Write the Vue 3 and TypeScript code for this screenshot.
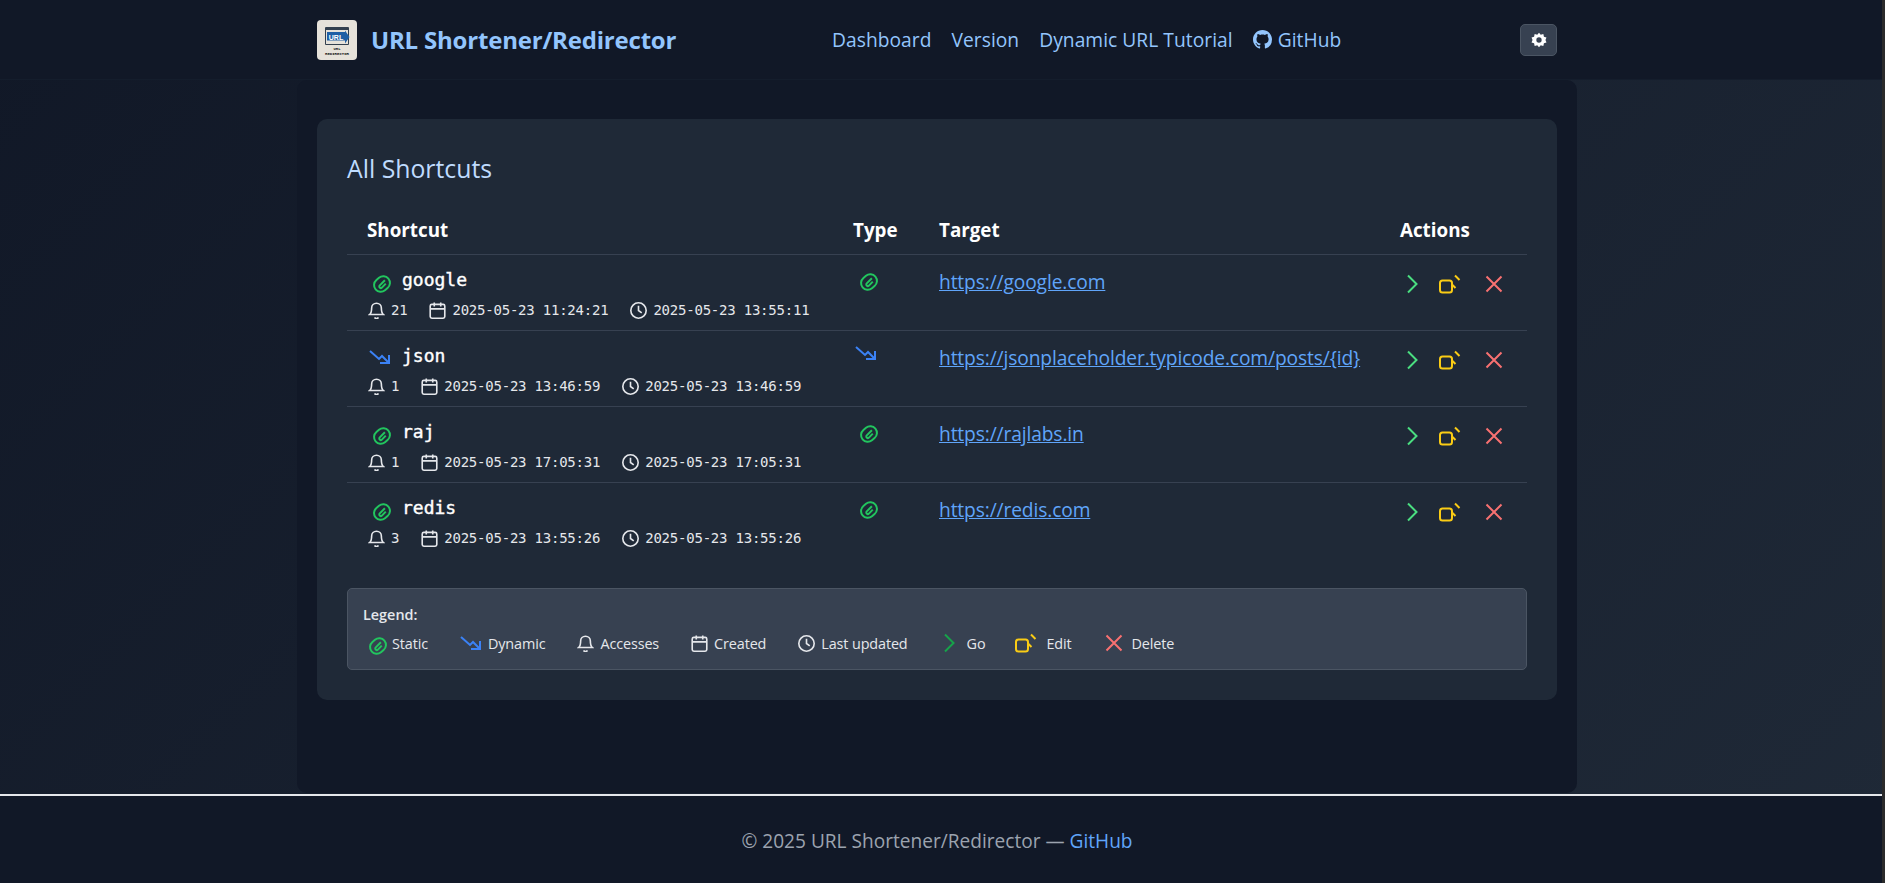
<script setup lang="ts">
interface Row { name: string; type: 'static' | 'dynamic'; hits: number; created: string; updated: string; url: string }
const rows: Row[] = [
  { name: 'google', type: 'static', hits: 21, created: '2025-05-23 11:24:21', updated: '2025-05-23 13:55:11', url: 'https://google.com' },
  { name: 'json', type: 'dynamic', hits: 1, created: '2025-05-23 13:46:59', updated: '2025-05-23 13:46:59', url: 'https://jsonplaceholder.typicode.com/posts/{id}' },
  { name: 'raj', type: 'static', hits: 1, created: '2025-05-23 17:05:31', updated: '2025-05-23 17:05:31', url: 'https://rajlabs.in' },
  { name: 'redis', type: 'static', hits: 3, created: '2025-05-23 13:55:26', updated: '2025-05-23 13:55:26', url: 'https://redis.com' },
]
const clipInner = 'M15.500 7.500L9.300 13.700a1.800 1.800 0 0 0 2.600 2.600L16.500 11.500'
const trend = 'M1 1L10 9L13 6L20 13M20 5V13H11'
const bell = 'M12 3a6 6 0 0 0-6 6c0 6-2.500 8-2.500 8h17S18 15 18 9a6 6 0 0 0-6-6zM9.700 20.500a2.500 2.500 0 0 0 4.600 0'
</script>

<template>
  <div class="page">
    <header class="topbar">
      <div class="topbar-inner">
        <div class="brand">
          <svg class="logo" viewBox="0 0 40 40">
            <rect width="40" height="40" rx="4" fill="#e6e2da" />
            <rect x="8" y="7" width="24" height="18" rx="1" fill="#33404f" />
            <rect x="9" y="10" width="22" height="14" fill="#e6e2da" />
            <path d="M10 12h18v-1.500l4.500 6.500-4.500 6.500v-3H10z" fill="#1f5fa5" />
            <text x="19" y="20" class="logo-url">URL</text>
            <text x="20" y="30" class="logo-cap">URL</text>
            <text x="20" y="35" class="logo-cap">REDIRECTOR</text>
          </svg>
          <span class="brand-name">URL Shortener/Redirector</span>
        </div>
        <nav class="nav">
          <a>Dashboard</a>
          <a>Version</a>
          <a>Dynamic URL Tutorial</a>
          <a class="gh">
            <svg viewBox="0 0 16 16" class="gh-icon"><path fill="currentColor" d="M8 0C3.580 0 0 3.580 0 8c0 3.540 2.290 6.530 5.470 7.590.4.070.55-.17.55-.38 0-.19-.01-.82-.01-1.490-2.010.37-2.530-.49-2.690-.94-.09-.23-.48-.94-.82-1.130-.28-.15-.68-.52-.01-.53.63-.01 1.080.58 1.230.82.720 1.210 1.870.87 2.330.66.070-.52.280-.87.510-1.070-1.780-.2-3.640-.89-3.640-3.950 0-.87.310-1.590.820-2.150-.08-.2-.36-1.020.08-2.120 0 0 .67-.21 2.200.82.640-.18 1.320-.27 2-.27s1.360.09 2 .27c1.530-1.040 2.200-.82 2.200-.82.440 1.100.160 1.920.080 2.120.510.560.820 1.270.820 2.150 0 3.070-1.870 3.750-3.650 3.950.290.250.540.730.540 1.480 0 1.070-.01 1.930-.01 2.200 0 .210.150.460.550.380A8.010 8.010 0 0 0 16 8c0-4.420-3.580-8-8-8z"/></svg>
            GitHub
          </a>
        </nav>
        <button class="theme-btn" aria-label="Theme">
          <svg viewBox="0 0 24 24" class="gear"><path fill="#fff" fill-rule="evenodd" d="M12 1l2.600 3.100 3.900-1 .9 3.900 3.800 1.300-1.500 3.700 1.500 3.700-3.800 1.300-.9 3.900-3.900-1L12 23l-2.600-3.100-3.900 1-.9-3.900-3.800-1.300L2.300 12 .8 8.300 4.600 7l.9-3.900 3.900 1zM12 8a4 4 0 1 0 0 8 4 4 0 0 0 0-8z"/></svg>
        </button>
      </div>
    </header>

    <div class="main-wrap">
      <main class="main">
        <section class="card">
          <h2 class="title">All Shortcuts</h2>
          <table class="table">
            <thead>
              <tr>
                <th class="c-short">Shortcut</th>
                <th class="c-type">Type</th>
                <th class="c-target">Target</th>
                <th class="c-act">Actions</th>
              </tr>
            </thead>
            <tbody>
              <tr v-for="r in rows" :key="r.name">
                <td class="c-short">
                  <div class="name-line">
                    <div class="slot">
                      <svg v-if="r.type === 'static'" class="clip name-clip" viewBox="0 0 24 24"><rect x="2" y="4" width="20" height="16" rx="8" transform="rotate(-40 12 12)" /><path :d="clipInner" /></svg>
                      <svg v-else class="trend name-trend" viewBox="0 0 22 14"><path :d="trend" /></svg>
                    </div>
                    <span class="name">{{ r.name }}</span>
                  </div>
                  <div class="meta">
                    <span class="meta-item">
                      <svg class="mi" viewBox="1.500 1.500 21 21"><path :d="bell" /></svg>{{ r.hits }}
                    </span>
                    <span class="meta-item">
                      <svg class="mi" viewBox="1.500 1.500 21 21"><rect x="3" y="4.500" width="18" height="17" rx="2" /><path d="M8 2v5M16 2v5M3 10h18" /></svg>{{ r.created }}
                    </span>
                    <span class="meta-item">
                      <svg class="mi" viewBox="1.500 1.500 21 21"><circle cx="12" cy="12" r="9.500" /><path d="M12 6v6l4 3" /></svg>{{ r.updated }}
                    </span>
                  </div>
                </td>
                <td class="c-type">
                  <svg v-if="r.type === 'static'" class="clip type-clip" viewBox="0 0 24 24"><rect x="2" y="4" width="20" height="16" rx="8" transform="rotate(-40 12 12)" /><path :d="clipInner" /></svg>
                  <svg v-else class="trend type-trend" viewBox="0 0 22 14"><path :d="trend" /></svg>
                </td>
                <td class="c-target"><a class="link">{{ r.url }}</a></td>
                <td class="c-act">
                  <div class="acts">
                    <svg class="act go" viewBox="0 0 24 24"><path d="M8 3.500l8.500 8.500-8.500 8.500" /></svg>
                    <svg class="act edit" viewBox="0 0 24 24"><rect x="2" y="8.500" width="12" height="12" rx="2.500" /><path d="M14 12.500l3.500 3.500M17 3.500l4.500 4.500" /></svg>
                    <svg class="act del" viewBox="0 0 24 24"><path d="M4.500 4.500l15 15M19.500 4.500l-15 15" /></svg>
                  </div>
                </td>
              </tr>
            </tbody>
          </table>

          <div class="legend">
            <div class="legend-title">Legend:</div>
            <div class="legend-items">
              <span class="li l-clip"><svg class="clip leg-clip" viewBox="0 0 24 24"><rect x="2" y="4" width="20" height="16" rx="8" transform="rotate(-40 12 12)" /><path :d="clipInner" /></svg>Static</span>
              <span class="li"><svg class="trend" viewBox="0 0 22 14"><path :d="trend" /></svg>Dynamic</span>
              <span class="li"><svg class="mi" viewBox="1.500 1.500 21 21"><path :d="bell" /></svg>Accesses</span>
              <span class="li"><svg class="mi" viewBox="1.500 1.500 21 21"><rect x="3" y="4.500" width="18" height="17" rx="2" /><path d="M8 2v5M16 2v5M3 10h18" /></svg>Created</span>
              <span class="li"><svg class="mi" viewBox="1.500 1.500 21 21"><circle cx="12" cy="12" r="9.500" /><path d="M12 6v6l4 3" /></svg>Last updated</span>
              <span class="li l-go"><svg class="act go-l" viewBox="0 0 24 24"><path d="M8 3.500l8.500 8.500-8.500 8.500" /></svg>Go</span>
              <span class="li l-edit"><svg class="act edit" viewBox="0 0 24 24"><rect x="2" y="8.500" width="12" height="12" rx="2.500" /><path d="M14 12.500l3.500 3.500M17 3.500l4.500 4.500" /></svg>Edit</span>
              <span class="li l-del"><svg class="act del" viewBox="0 0 24 24"><path d="M4.500 4.500l15 15M19.500 4.500l-15 15" /></svg>Delete</span>
            </div>
          </div>
        </section>
      </main>
    </div>

    <hr class="rule" />
    <footer class="footer">© 2025 URL Shortener/Redirector — <a class="foot-link">GitHub</a></footer>
  </div>
</template>

<style>
body { margin: 0; background: #2b2b2b; overflow: hidden; }
</style>

<style scoped>
.page {
  width: 1882px;
  height: 883px;
  font-family: "Open Sans", "Noto Sans", sans-serif;
  background: linear-gradient(135deg, #111827 0%, #1f2937 100%);
  display: flex;
  flex-direction: column;
  overflow: hidden;
}
.topbar { background: #111827; height: 80px; flex: none; padding-right: 8px; border-bottom: 1px solid #141d2c; box-sizing: border-box; }
.topbar-inner {
  width: 1240px;
  margin: 0 auto;
  height: 79px;
  display: grid;
  grid-template-columns: 515px auto 1fr;
  align-items: center;
}
.brand { display: flex; align-items: center; gap: 14px; }
.logo { width: 40px; height: 40px; display: block; }
.logo-url { font: 700 7px "Liberation Sans", sans-serif; fill: #fff; text-anchor: middle; }
.logo-cap { font: 700 4px "Liberation Mono", monospace; fill: #222; text-anchor: middle; }
.brand-name { font-size: 24px; font-weight: 700; color: #93c5fd; letter-spacing: -0.200px; }
.nav { display: flex; align-items: center; gap: 20px; font-size: 19.200px; color: #93c5fd; font-weight: 500; letter-spacing: 0.050px; }
.gh { display: flex; align-items: center; gap: 6px; }
.gh-icon { width: 19px; height: 19px; }
.theme-btn {
  justify-self: end;
  width: 37px; height: 32px;
  background: #374151;
  border: 1px solid #4b5563;
  border-radius: 5px;
  padding: 0;
  display: flex; align-items: center; justify-content: center;
}
.gear { width: 16px; height: 16px; display: block; }
.main-wrap { height: 714px; flex: none; padding-right: 8px; box-sizing: border-box; }
.main {
  width: 1280px;
  height: 713px;
  margin: 0 auto;
  padding: 39px 20px 0;
  box-sizing: border-box;
  background: #111827;
  border-radius: 10px;
}
.card {
  background: #1f2937;
  border-radius: 10px;
  padding: 30px 30px 0;
  height: 581px;
  box-sizing: border-box;
}
.title { margin: 0 0 19px; font-size: 24.800px; font-weight: 500; color: #bfdbfe; line-height: 38px; }
.table { width: 100%; border-collapse: separate; border-spacing: 0; table-layout: fixed; }
th { color: #fff; font-size: 18.800px; font-weight: 700; text-align: left; padding: 0 20px; height: 49px; box-sizing: border-box; border-bottom: 1px solid #374151; }
td { padding: 0 20px; vertical-align: top; height: 76px; border-bottom: 1px solid #374151; box-sizing: border-box; }
tbody tr:last-child td { border-bottom: 0; }
.c-short { width: 486px; box-sizing: border-box; }
.c-type { width: 86px; box-sizing: border-box; }
.c-target { width: 461px; box-sizing: border-box; }
.c-act { box-sizing: border-box; }
.name-line { display: flex; align-items: center; height: 24px; padding-top: 13px; }
.slot { width: 35px; height: 24px; flex: none; position: relative; display: flex; align-items: center; }
.name { font: 400 18px/24px "DejaVu Sans Mono", monospace; color: #fff; -webkit-text-stroke: 0.400px #fff; }
.clip { width: 20px; height: 20px; fill: none; stroke: #22c55e; stroke-width: 2.400; flex: none; overflow: visible; }
.trend { width: 22px; height: 14px; fill: none; stroke: #3b82f6; stroke-width: 2; flex: none; overflow: visible; }
.name-clip { margin: 8px 0 0 5px; }
.name-trend { margin: 2px 0 0 2px; }
.type-clip { display: block; margin: 17px 0 0 6px; }
.type-trend { display: block; margin: 15px 0 0 2px; }
.meta { display: flex; gap: 22px; font: 14px/20px "DejaVu Sans Mono", monospace; color: #e5e7eb; letter-spacing: -0.220px; margin: 8px 0 0 1px; }
.meta-item { display: flex; align-items: center; gap: 6px; }
.mi { width: 17px; height: 17px; fill: none; stroke: #e5e7eb; stroke-width: 2; flex: none; }
.link { color: #60a5fa; text-decoration: underline; font-size: 19.200px; line-height: 26px; display: block; padding-top: 14px; letter-spacing: -0.120px; white-space: nowrap; }
.acts { display: flex; align-items: center; gap: 14px; padding: 17px 0 0; }
.act { width: 24px; height: 24px; fill: none; stroke-width: 2; flex: none; }
.go { stroke: #4ade80; }
.go-l { stroke: #16a34a; }
.edit { stroke: #facc15; }
.del { stroke: #f87171; }
.acts .del { margin-left: 6px; }
.legend {
  margin-top: 29px;
  background: #374151;
  border: 1px solid #4b5563;
  border-radius: 5px;
  height: 82px;
  box-sizing: border-box;
  padding: 16px 15px;
  color: #e5e7eb;
  font-size: 14.400px;
}
.legend-title { font-weight: 600; line-height: 20px; }
.legend-items { display: flex; gap: 32px; height: 24px; margin: 6px 0 0 5px; align-items: center; letter-spacing: -0.120px; white-space: nowrap; }
.li { display: flex; align-items: center; gap: 6px; }
.l-clip { gap: 4px; }
.leg-clip { margin-top: 5px; }
.l-go { margin-left: -3px; }
.l-edit { gap: 8px; margin-left: -3px; }
.l-del { margin-left: -2px; }
.rule { margin: 0; height: 2px; width: 100%; border: 0; background: #e5e7eb; flex: none; }
.footer { background: #111827; flex: 1; padding-right: 8px; text-align: center; color: #9ca3af; font-size: 19.100px; line-height: 90px; }
.foot-link { color: #60a5fa; }
</style>
